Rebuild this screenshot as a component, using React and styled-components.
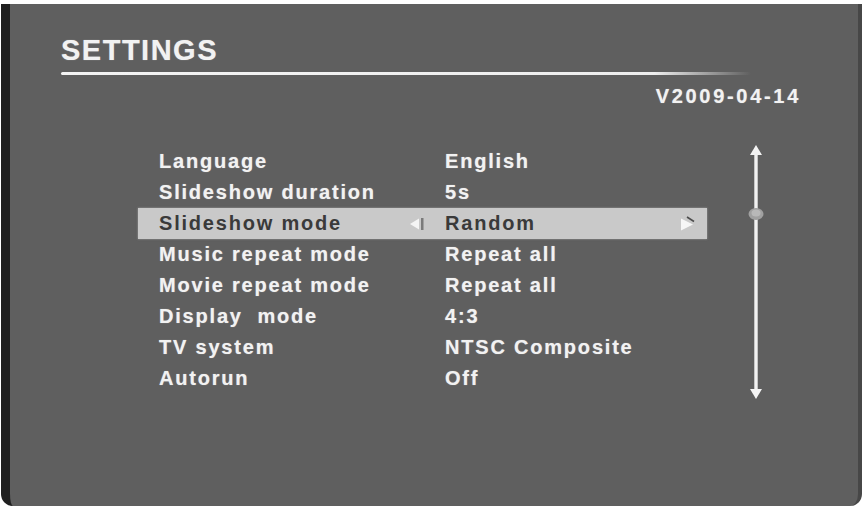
import React from 'react';
import styled, { createGlobalStyle } from 'styled-components';

const GlobalStyle = createGlobalStyle`
  html, body {
    margin: 0;
    padding: 0;
    background: #fff;
  }
  body {
    font-family: "Liberation Sans", Arial, sans-serif;
  }
`;

const Frame = styled.div`
  width: 865px;
  height: 506px;
  padding: 4px 3px 0 1px;
  box-sizing: border-box;
  background: #fff;
`;

const Screen = styled.div`
  height: 100%;
  box-sizing: border-box;
  background: #5f5f5f;
  border-left: 9px solid #1f1f1f;
  border-right: 4px solid #474747;
  border-radius: 0 0 12px 12px;
  padding: 32px 0 0 51px;
  color: #f2f2f2;
  text-shadow: 0 0 1px rgba(255, 255, 255, 0.5);
`;

const Title = styled.h1`
  margin: 0;
  font-size: 29px;
  line-height: 29px;
  font-weight: bold;
  letter-spacing: 1.5px;
`;

const Rule = styled.div`
  margin-top: 7px;
  width: 690px;
  height: 3px;
  border-radius: 2px;
  background: linear-gradient(to right, #f4f4f4 0%, #eeeeee 86%, rgba(240, 240, 240, 0) 100%);
`;

const Version = styled.div`
  margin: 10px 0 0 0;
  width: 740px;
  text-align: right;
  font-size: 20px;
  line-height: 22px;
  font-weight: bold;
  letter-spacing: 2.7px;
`;

const Body = styled.div`
  display: flex;
  margin-top: 39px;
  margin-left: 77px;
`;

const List = styled.div`
  display: flex;
  flex-direction: column;
  width: 569px;
`;

const Row = styled.div`
  display: flex;
  align-items: center;
  height: 31px;
  padding-left: 21px;
  font-size: 20px;
  font-weight: bold;
  letter-spacing: 1.8px;
  background: ${p => (p.$active ? '#c9c9c9' : 'transparent')};
  color: ${p => (p.$active ? '#3a3a3a' : '#f2f2f2')};
  text-shadow: ${p => (p.$active ? 'none' : '0 0 1px rgba(255,255,255,0.5)')};
  box-shadow: ${p => (p.$active ? '0 0 2px rgba(200,200,200,0.6)' : 'none')};
`;

const Label = styled.span`
  flex: 0 0 250px;
  white-space: pre;
`;

const ArrowSlot = styled.span`
  display: flex;
  align-items: center;
  width: 36px;
  height: 100%;
`;

const Value = styled.span`
  flex: 1;
`;

const RightSlot = styled.span`
  display: flex;
  align-items: center;
  width: 28px;
  height: 100%;
`;

const ScrollTrack = styled.div`
  margin-left: 40px;
  margin-top: -2px;
`;

const LeftArrow = () => (
  <svg width="16" height="16" viewBox="0 0 16 16">
    <polygon points="1,8 10,2.5 10,13.5" fill="#f4f4f4" />
    <rect x="12" y="2" width="2.5" height="12" fill="#7a7a7a" />
  </svg>
);

const RightArrow = () => (
  <svg width="18" height="18" viewBox="0 0 18 18">
    <polygon points="2,3.5 14,9.5 2,15.5" fill="#f6f6f6" />
    <line x1="8" y1="2" x2="15" y2="6.5" stroke="#4d4d4d" strokeWidth="1.6" />
  </svg>
);

const ScrollBar = () => (
  <svg width="18" height="256" viewBox="0 0 18 256">
    <polygon points="9,1 3,11 15,11" fill="#f4f4f4" />
    <rect x="7.3" y="8" width="3.4" height="240" fill="#f2f2f2" />
    <polygon points="9,255 3,245 15,245" fill="#f4f4f4" />
    <ellipse cx="9" cy="70" rx="7.5" ry="6" fill="#a0a0a0" />
    <ellipse cx="9" cy="69" rx="4.5" ry="3.5" fill="#b8b8b8" />
  </svg>
);

const settings = [
  ['Language', 'English'],
  ['Slideshow duration', '5s'],
  ['Slideshow mode', 'Random', true],
  ['Music repeat mode', 'Repeat all'],
  ['Movie repeat mode', 'Repeat all'],
  ['Display  mode', '4:3'],
  ['TV system', 'NTSC Composite'],
  ['Autorun', 'Off'],
];

export default function App() {
  return (
    <>
      <GlobalStyle />
      <Frame>
        <Screen>
          <Title>SETTINGS</Title>
          <Rule />
          <Version>V2009-04-14</Version>
          <Body>
            <List>
              {settings.map(([label, value, active]) => (
                <Row key={label} $active={active}>
                  <Label>{label}</Label>
                  <ArrowSlot>{active && <LeftArrow />}</ArrowSlot>
                  <Value>{value}</Value>
                  <RightSlot>{active && <RightArrow />}</RightSlot>
                </Row>
              ))}
            </List>
            <ScrollTrack>
              <ScrollBar />
            </ScrollTrack>
          </Body>
        </Screen>
      </Frame>
    </>
  );
}
